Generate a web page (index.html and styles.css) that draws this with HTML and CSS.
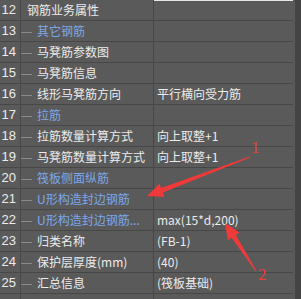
FILE: index.html
```html
<!DOCTYPE html>
<html lang="zh">
<head>
    <meta charset="UTF-8">
    <title>钢筋业务属性</title>
    <link rel="stylesheet" href="styles.css">
</head>
<body>

    <div class="grid">
        <div class="top-edge"></div>

        <div class="row">
            <div class="num">12</div>
            <div class="name root">钢筋业务属性</div>
            <div class="value"></div>
        </div>
        <div class="row">
            <div class="num">13</div>
            <div class="name blue">其它钢筋</div>
            <div class="value"></div>
        </div>
        <div class="row">
            <div class="num">14</div>
            <div class="name">马凳筋参数图</div>
            <div class="value"></div>
        </div>
        <div class="row">
            <div class="num">15</div>
            <div class="name">马凳筋信息</div>
            <div class="value"></div>
        </div>
        <div class="row">
            <div class="num">16</div>
            <div class="name">线形马凳筋方向</div>
            <div class="value">平行横向受力筋</div>
        </div>
        <div class="row">
            <div class="num">17</div>
            <div class="name blue">拉筋</div>
            <div class="value"></div>
        </div>
        <div class="row">
            <div class="num">18</div>
            <div class="name">拉筋数量计算方式</div>
            <div class="value">向上取整+1</div>
        </div>
        <div class="row">
            <div class="num">19</div>
            <div class="name">马凳筋数量计算方式</div>
            <div class="value">向上取整+1</div>
        </div>
        <div class="row">
            <div class="num">20</div>
            <div class="name blue">筏板侧面纵筋</div>
            <div class="value"></div>
        </div>
        <div class="row">
            <div class="num">21</div>
            <div class="name blue">U形构造封边钢筋</div>
            <div class="value"></div>
        </div>
        <div class="row">
            <div class="num">22</div>
            <div class="name blue">U形构造封边钢筋...</div>
            <div class="value">max(15*d,200)</div>
        </div>
        <div class="row">
            <div class="num">23</div>
            <div class="name">归类名称</div>
            <div class="value">(FB-1)</div>
        </div>
        <div class="row">
            <div class="num">24</div>
            <div class="name">保护层厚度(mm)</div>
            <div class="value">(40)</div>
        </div>
        <div class="row">
            <div class="num">25</div>
            <div class="name">汇总信息</div>
            <div class="value">(筏板基础)</div>
        </div>
        <div class="row">
            <div class="num"></div>
            <div class="name"></div>
            <div class="value"></div>
        </div>
    </div>

    <div class="scrollbar"></div>

    <!-- annotation arrows drawn over the grid -->
    <svg class="marks" width="301" height="299" viewBox="0 0 301 299">
        <polygon fill="#f03a3a" points="249.8,156.5 161.1,188 159.5,183.8 147,196 164.5,196.9 162.9,192.6 250.2,157.5"/>
        <text x="251" y="153" class="mark-label">1</text>
        <polygon fill="#f03a3a" points="225,223 239.6,232.6 235.8,235 256.4,270.7 255.6,271.3 231.6,237.8 227.8,240.2"/>
        <text x="258" y="280" class="mark-label">2</text>
    </svg>

</body>
</html>
```

FILE: styles.css
```css
body {
    margin: 0;
    width: 301px;
    height: 299px;
    overflow: hidden;
    background-color: #5a5a5a;
    font-family: "Noto Sans CJK SC", "Noto Sans", sans-serif;
    font-size: 12px;
    color: #ececec;
    display: flex;
    position: relative;
}

.grid {
    width: 293px;
    height: 299px;
    overflow: hidden;
    display: flex;
    flex-direction: column;
    position: relative;
}

.top-edge {
    position: absolute;
    top: 0;
    left: 153px;
    width: 140px;
    height: 1px;
    background: #e6e6e6;
}

.row {
    display: grid;
    grid-template-columns: 21px 133px 139px;
    height: 20px;
    flex-shrink: 0;
    border-bottom: 1px solid #474747;
}

.num {
    border-right: 1px solid #474747;
    font-family: "Liberation Sans", sans-serif;
    font-size: 13px;
    text-align: right;
    padding-right: 4px;
    line-height: 20px;
}

.name {
    border-right: 1px solid #474747;
    line-height: 20px;
    padding-left: 16px;
    white-space: nowrap;
    overflow: hidden;
    position: relative;
}

.name::before {
    content: "";
    position: absolute;
    left: 0;
    top: 11px;
    width: 11px;
    height: 1px;
    background: #8a8a8a;
}

.name.root {
    padding-left: 6px;
}

.name.root::before,
.row:last-child .name::before {
    display: none;
}

.blue {
    color: #7ca8ea;
}

.value {
    line-height: 20px;
    padding-left: 3px;
    white-space: nowrap;
}

.scrollbar {
    margin-left: auto;
    width: 6px;
    height: 100%;
    background: #444444;
}

.marks {
    position: absolute;
    top: 0;
    left: 0;
}

.mark-label {
    font-family: "Liberation Serif", serif;
    font-size: 17px;
    fill: #f03a3a;
}
```
